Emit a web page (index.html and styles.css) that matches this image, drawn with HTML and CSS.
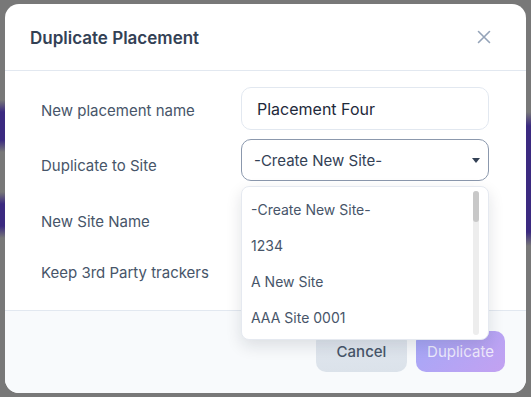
FILE: index.html
```html
<!DOCTYPE html>
<html lang="en">
<head>
    <meta charset="UTF-8">
    <meta name="viewport" content="width=device-width, initial-scale=1.0">
    <title>Duplicate Placement</title>
    <link rel="stylesheet" href="styles.css">
</head>
<body>
    <div class="modal">
        <div class="modal-header">
            <h2>Duplicate Placement</h2>
            <button class="close-modal" aria-label="Close">
                <svg width="14" height="14" viewBox="0 0 14 14"><path d="M1.5 1.5L12.5 12.5M12.5 1.5L1.5 12.5" stroke="#94a3b8" stroke-width="1.6" stroke-linecap="round"/></svg>
            </button>
        </div>
        <div class="modal-body">
            <div class="field-row field-row--first">
                <label class="field-label">New placement name</label>
                <input class="field-input" type="text" value="Placement Four">
            </div>
            <div class="field-row">
                <label class="field-label">Duplicate to Site</label>
                <div class="field-select">
                    <span>-Create New Site-</span>
                    <svg class="caret" width="8" height="5" viewBox="0 0 8 5"><path d="M0 0H8L4 5Z" fill="#334155"/></svg>
                </div>
            </div>
            <div class="field-row field-row--spaced">
                <label class="field-label">New Site Name</label>
                <input class="field-input" type="text">
            </div>
            <div class="field-row field-row--last">
                <label class="field-label">Keep 3rd Party trackers</label>
            </div>

            <div class="dropdown">
                <div class="option">-Create New Site-</div>
                <div class="option">1234</div>
                <div class="option">A New Site</div>
                <div class="option">AAA Site 0001</div>
                <div class="scroll-track"><div class="scroll-thumb"></div></div>
            </div>
        </div>
        <div class="modal-footer">
            <button class="btn btn-cancel">Cancel</button>
            <button class="btn btn-primary" disabled>Duplicate</button>
        </div>
    </div>
</body>
</html>
```

FILE: styles.css
```css
body {
    margin: 0;
    padding: 4px 5px;
    height: 397px;
    box-sizing: border-box;
    font-family: Inter, "Noto Sans", sans-serif;
    background-color: #787878;
    background-image:
        linear-gradient(to bottom, transparent 100px, #3b2a80 112px, #3b2a80 140px, transparent 152px, transparent 192px, #3b2a80 204px, #3b2a80 226px, transparent 238px),
        linear-gradient(to bottom, transparent 112px, #3b2a80 126px, #3b2a80 232px, transparent 246px);
    background-size: 5px 100%, 5px 100%;
    background-position: left top, right top;
    background-repeat: no-repeat;
    overflow: hidden;
}

.modal {
    height: 389px;
    background: white;
    border-radius: 14px;
    display: flex;
    flex-direction: column;
    overflow: hidden;
    position: relative;
}

.modal-header {
    display: flex;
    align-items: center;
    justify-content: space-between;
    height: 67px;
    padding: 0 35px 0 25px;
    border-bottom: 1px solid #e2e8f0;
    box-sizing: border-box;
}
.modal-header h2 {
    margin: 2px 0 0;
    font-size: 17px;
    font-weight: 600;
    color: #334155;
}
.close-modal {
    border: none;
    background: none;
    padding: 0;
    display: flex;
}

.modal-body {
    flex: 1;
    padding: 16px 37px 0 36px;
    position: relative;
}

.field-row {
    display: flex;
    align-items: flex-start;
}
.field-row + .field-row {
    margin-top: 9px;
}
.field-row--spaced {
    margin-top: 14px !important;
}
.field-row--last {
    height: 40px;
    align-items: center;
    margin-top: 15px !important;
}

.field-label {
    width: 200px;
    flex-shrink: 0;
    padding-top: 16px;
    font-size: 15px;
    line-height: 22px;
    color: #475569;
}
.field-row--first .field-label {
    padding-top: 13px;
}
.field-row--last .field-label {
    padding-top: 0;
}

.field-input {
    width: 248px;
    height: 43px;
    box-sizing: border-box;
    border: 1px solid #e2e8f0;
    border-radius: 10px;
    padding: 0 15px;
    font-family: inherit;
    font-size: 16px;
    color: #1e293b;
    outline: none;
}

.field-select {
    width: 248px;
    height: 42px;
    box-sizing: border-box;
    border: 1px solid #8b98ad;
    border-radius: 10px;
    padding: 0 8px 0 12px;
    display: flex;
    align-items: center;
    justify-content: space-between;
    font-size: 15px;
    color: #334155;
}

.dropdown {
    position: absolute;
    top: 115px;
    left: 236px;
    width: 248px;
    height: 154px;
    box-sizing: border-box;
    padding-top: 5px;
    background: white;
    border: 1px solid #e5e9f0;
    border-radius: 8px;
    box-shadow: 0 6px 16px rgba(15, 23, 42, 0.12);
    z-index: 10;
}
.option {
    height: 36px;
    line-height: 36px;
    padding-left: 9px;
    font-size: 14px;
    color: #475569;
}
.scroll-track {
    position: absolute;
    top: 4px;
    bottom: 4px;
    right: 9px;
    width: 6px;
    border-radius: 3px;
    background: #ededed;
}
.scroll-thumb {
    height: 31px;
    border-radius: 3px;
    background: #c8c8c8;
}

.modal-footer {
    display: flex;
    justify-content: flex-end;
    gap: 9px;
    padding: 20px 21px 0;
    height: 83px;
    box-sizing: border-box;
    background: #f8fafc;
    border-top: 1px solid #e2e8f0;
}

.btn {
    height: 41px;
    border: none;
    border-radius: 10px;
    font-family: inherit;
    font-size: 15px;
    font-weight: 500;
}
.btn-cancel {
    width: 91px;
    background: linear-gradient(to bottom, #e2e8f0, #dbe2ea);
    color: #475569;
}
.btn-primary {
    width: 89px;
    background: linear-gradient(135deg, #a4a8f8, #c3a1f1);
    color: rgba(255, 255, 255, 0.78);
    font-weight: 400;
}
```
